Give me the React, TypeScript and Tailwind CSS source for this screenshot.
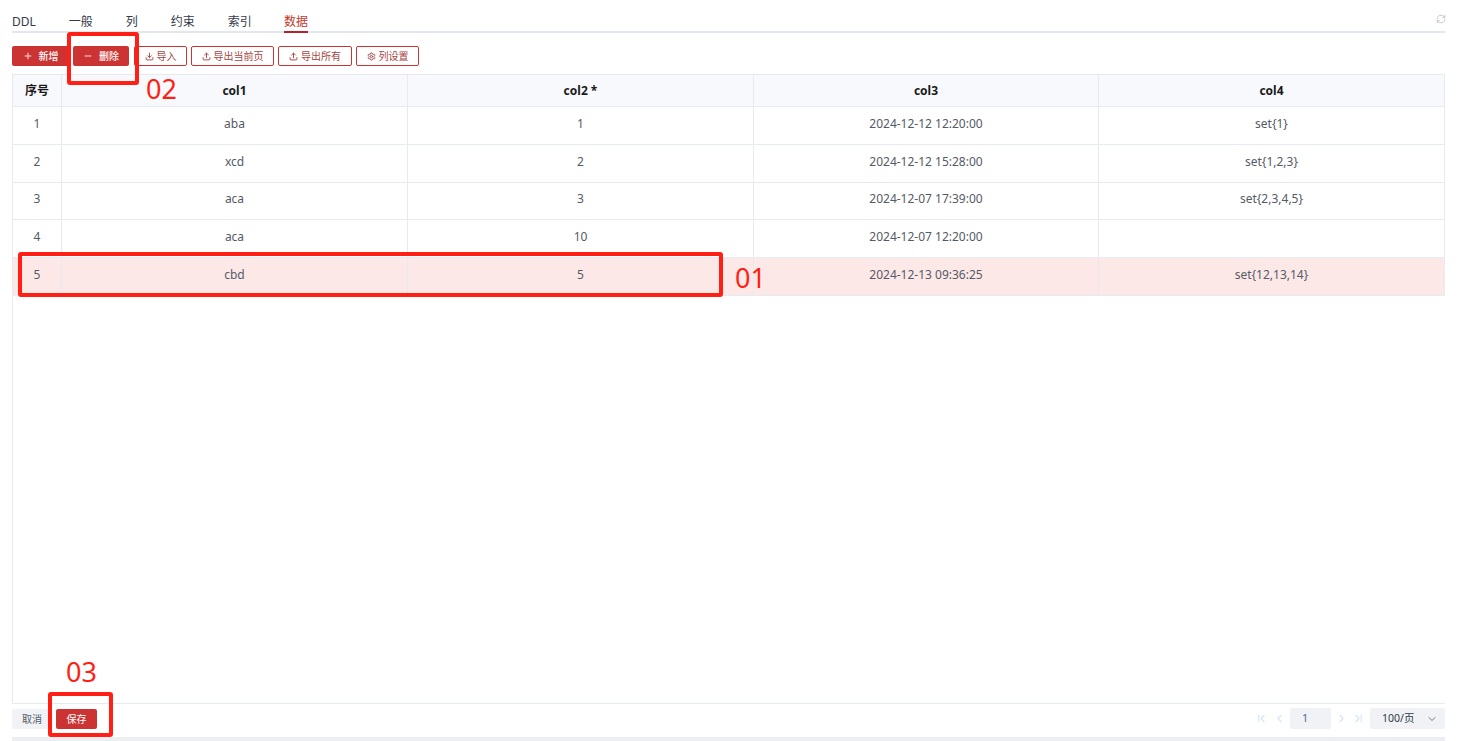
import { ChevronDown, ChevronFirst, ChevronLast, ChevronLeft, ChevronRight, Download, Minus, Plus, RefreshCw, Settings, Upload } from "lucide-react";
import type { ReactNode } from "react";

const tabs = ["DDL", "一般", "列", "约束", "索引", "数据"];

const rows = [
  ["1", "aba", "1", "2024-12-12 12:20:00", "set{1}"],
  ["2", "xcd", "2", "2024-12-12 15:28:00", "set{1,2,3}"],
  ["3", "aca", "3", "2024-12-07 17:39:00", "set{2,3,4,5}"],
  ["4", "aca", "10", "2024-12-07 12:20:00", ""],
  ["5", "cbd", "5", "2024-12-13 09:36:25", "set{12,13,14}"],
];

const gridCols = "grid grid-cols-[49px_346px_346px_345px_346px]";

function OutlineButton({ icon, label, width }: { icon: ReactNode; label: string; width: string }) {
  return (
    <button className={`flex h-5 items-center justify-center gap-[3px] rounded-[2px] border border-[#cc3333] bg-white text-[10px] text-[#a84545] ${width}`}>
      {icon}
      {label}
    </button>
  );
}

// 标注框和编号
function Annotation({ className }: { className: string }) {
  return <div className={`absolute rounded-[3px] border-[4px] border-[#ff1f14] ${className}`} />;
}

function Mark({ className, children }: { className: string; children: ReactNode }) {
  return <div className={`absolute text-[27px] leading-none text-[#ff1f14] ${className}`}>{children}</div>;
}

export default function App() {
  return (
    <div className="relative flex h-[741px] w-[1469px] flex-col overflow-hidden bg-white pl-3 pr-6 font-['Noto_Sans','Noto_Sans_CJK_SC',sans-serif] text-[12px] text-[#555a66]">
      {/* 标签页 */}
      <div className="mt-[12px] flex h-[21px] items-start justify-between border-b-2 border-[#e4e6ef]">
        <div className="flex gap-[33px]">
          {tabs.map((tab) => (
            <div
              key={tab}
              className={
                tab === "数据"
                  ? "-mb-[2px] -ml-px h-[21px] border-b-2 border-[#b5222d] leading-[19px] text-[#c0392b]"
                  : "h-[19px] leading-[19px] text-[#333a47]"
              }
            >
              {tab}
            </div>
          ))}
        </div>
        <RefreshCw className="mt-[2px] mr-[-1px] text-[#a8abb2]" size={10} strokeWidth={1.5} />
      </div>

      {/* 工具栏 */}
      <div className="mt-[13px] flex h-5 gap-1">
        <button className="flex h-5 w-[57px] items-center justify-center gap-[6px] rounded-[2px] bg-[#cc3333] text-[10px] font-medium text-white">
          <Plus size={10} />
          新增
        </button>
        <button className="flex h-5 w-14 items-center justify-center gap-[6px] rounded-[2px] bg-[#cc3333] text-[10px] font-medium text-white">
          <Minus size={10} />
          删除
        </button>
        <OutlineButton icon={<Download size={9} strokeWidth={2.5} />} label="导入" width="w-[53px] ml-px" />
        <OutlineButton icon={<Upload size={9} strokeWidth={2.5} />} label="导出当前页" width="w-[83px]" />
        <OutlineButton icon={<Upload size={9} strokeWidth={2.5} />} label="导出所有" width="w-[74px]" />
        <OutlineButton icon={<Settings size={9} strokeWidth={2.5} />} label="列设置" width="w-[63px]" />
      </div>

      {/* 数据表格 */}
      <div className="mt-2 flex-1 border-l border-b border-[#e8eaf1]">
        <div className={`${gridCols} h-[33px] border-t border-b border-[#e8eaf1] bg-[#f8f9fc] font-bold text-[#1a1a1a]`}>
          {["序号", "col1", "col2 *", "col3", "col4"].map((title) => (
            <div key={title} className="flex items-center justify-center border-r border-[#e8eaf1]">
              {title}
            </div>
          ))}
        </div>
        {rows.map((row) => (
          <div
            key={row[0]}
            className={`${gridCols} h-[37.8px] border-b border-[#e8eaf1] ${row[0] === "5" ? "bg-[#fde8e8]" : ""}`}
          >
            {row.map((cell, i) => (
              <div key={i} className="flex items-center justify-center border-r border-[#e8eaf1] pb-[3px]">
                {cell}
              </div>
            ))}
          </div>
        ))}
      </div>

      {/* 底部操作栏 */}
      <div className="flex h-[33px] items-start justify-between pt-1">
        <div className="flex gap-1 pt-px">
          <button className="h-5 w-10 rounded-[2px] bg-[#f0f2f5] text-[10px] text-[#555a66]">取消</button>
          <button className="h-5 w-[41px] rounded-[2px] bg-[#cc3333] text-[10px] text-white">保存</button>
        </div>
        <div className="flex items-center text-[#d3e4fb]">
          <ChevronFirst size={13} />
          <ChevronLeft className="ml-[5px]" size={13} />
          <div className="ml-[4px] flex h-[21px] w-[41px] items-center rounded-[2px] bg-[#f0f2f5] pl-3 text-[11px] text-[#4a6d96]">1</div>
          <ChevronRight className="ml-[4px]" size={13} />
          <ChevronLast className="ml-[4px]" size={13} />
          <div className="ml-[5px] flex h-[21px] w-[75px] items-center justify-between rounded-[2px] bg-[#f0f2f5] pr-[7px] pl-[12px] text-[10.5px] text-[#333a47]">
            100/页
            <ChevronDown className="text-[#73767a]" size={12} />
          </div>
        </div>
      </div>
      <div className="h-1 bg-[#eceef2]" />

      <Annotation className="left-[67px] top-[32px] h-[53px] w-[72px]" />
      <Annotation className="left-[18px] top-[252px] h-[45px] w-[705px]" />
      <Annotation className="left-[48px] top-[692px] h-[45px] w-[65px]" />
      <Mark className="left-[146px] top-[75px]">02</Mark>
      <Mark className="left-[735px] top-[264px]">01</Mark>
      <Mark className="left-[66px] top-[658px]">03</Mark>
    </div>
  );
}
